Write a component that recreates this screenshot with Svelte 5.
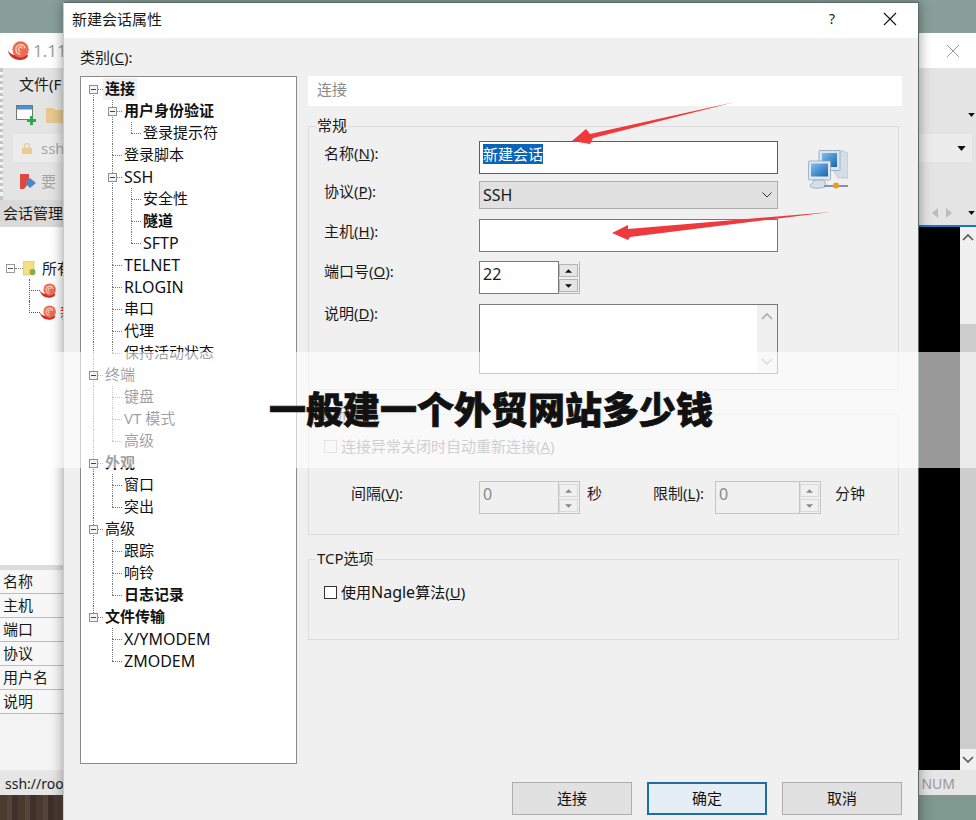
<script>
  // category tree of the session dialog: level + label
  const categories = [
    { level: 0, text: '连接', bold: true, open: true, current: true },
    { level: 1, text: '用户身份验证', bold: true, open: true },
    { level: 2, text: '登录提示符' },
    { level: 1, text: '登录脚本' },
    { level: 1, text: 'SSH', open: true, latin: true },
    { level: 2, text: '安全性' },
    { level: 2, text: '隧道', bold: true },
    { level: 2, text: 'SFTP', latin: true },
    { level: 1, text: 'TELNET', latin: true },
    { level: 1, text: 'RLOGIN', latin: true },
    { level: 1, text: '串口' },
    { level: 1, text: '代理' },
    { level: 1, text: '保持活动状态' },
    { level: 0, text: '终端', open: true },
    { level: 1, text: '键盘' },
    { level: 1, text: 'VT 模式' },
    { level: 1, text: '高级' },
    { level: 0, text: '外观', bold: true, open: true },
    { level: 1, text: '窗口' },
    { level: 1, text: '突出' },
    { level: 0, text: '高级', open: true },
    { level: 1, text: '跟踪' },
    { level: 1, text: '响铃' },
    { level: 1, text: '日志记录', bold: true },
    { level: 0, text: '文件传输', bold: true, open: true },
    { level: 1, text: 'X/YMODEM', latin: true },
    { level: 1, text: 'ZMODEM', latin: true }
  ]

  // does column c carry on below row i?
  function continues(i, c) {
    for (let k = i + 1; k < categories.length; k++) {
      if (categories[k].level < c) return false
      if (categories[k].level === c) return true
    }
    return false
  }

  const props = ['名称', '主机', '端口', '协议', '用户名', '说明']
</script>

{#snippet snail(cls)}
  <svg class={cls} viewBox="0 0 20 18">
    <path d="M0 9c1 6 6 9 11 9 5 0 8-2 8-5H6C4 13 2 12 0 9z" fill="#c9302c" />
    <circle cx="12" cy="8" r="7.8" fill="#ee6a50" />
    <path d="M12 12.4a4.4 4.4 0 1 1 4.2-5.6M12 9.8a2 2 0 1 1 1.8-2.8" fill="none" stroke="#fbd2bd" stroke-width="1.3" />
  </svg>
{/snippet}

{#snippet caret(cls)}
  <svg class={cls} viewBox="0 0 10 6"><path d="M0 0h10L5 6z" fill="#111" /></svg>
{/snippet}

{#snippet spin(disabled, cls)}
  <div class="spin {cls}" class:off={disabled}>
    <div class="spin-value">{cls === 'port' ? '22' : '0'}</div>
    <div class="spin-btns">
      <span class="spin-btn"><svg viewBox="0 0 8 4"><path d="M4 0l4 4H0z" /></svg></span>
      <span class="spin-btn"><svg viewBox="0 0 8 4"><path d="M0 0h8L4 4z" /></svg></span>
    </div>
  </div>
{/snippet}

<div class="desktop">
  <!-- main window behind the dialog -->
  <div class="app">
    <header class="app-title">
      {@render snail('logo')}
      <span class="app-version">1.11</span>
      <svg class="app-close" viewBox="0 0 14 14"><path d="M1 1l12 12M13 1L1 13" /></svg>
    </header>

    <div class="toolbar">
      <div class="menu">文件(F</div>
      <div class="tools">
        <svg class="tool-new" viewBox="0 0 20 20">
          <rect x="0.5" y="0.5" width="16" height="14" fill="#fff" stroke="#777" />
          <rect x="1" y="1" width="15" height="3.5" fill="#4f8fd0" />
          <path d="M11 14h3v-3h3v3h3v3h-3v3h-3v-3h-3z" fill="#2fa84a" />
        </svg>
        <svg class="tool-folder" viewBox="0 0 18 16"><path d="M0 1h7l2 2h9v13H0z" fill="#e7c88f" /></svg>
        {@render caret('tool-caret')}
      </div>
      <div class="address">
        <svg class="lock" viewBox="0 0 10 11">
          <path d="M2.5 5V3a2.500 2.500 0 0 1 5 0v2" fill="none" stroke="#e8cb95" stroke-width="1.3" />
          <rect y="4.500" width="10" height="6.500" rx="1" fill="#e8cb95" />
        </svg>
        <span class="address-text">ssh</span>
        {@render caret('address-caret')}
      </div>
      <div class="hint">
        <svg class="hint-icon" viewBox="0 0 16 15">
          <path d="M0 0h9v9l-5 6H0z" fill="#e0473f" />
          <path d="M10 4l6 5-6 5-5-5z" fill="#4f86c6" />
        </svg>
        <span>要</span>
      </div>
    </div>

    <div class="split">
      <aside class="side">
        <div class="side-head">会话管理</div>
        <div class="side-search"></div>
        <div class="side-tree">
          <div class="st-row">
            <svg class="st-exp" viewBox="0 0 9 9"><rect x=".5" y=".5" width="8" height="8" fill="#fff" stroke="#999" /><path d="M2 4.500h5" stroke="#555" /></svg>
            <span class="st-stub"></span>
            <svg class="st-folder" viewBox="0 0 13 15">
              <rect width="11" height="14" fill="#f6df7e" stroke="#cbb866" stroke-width=".6" />
              <circle cx="9.500" cy="11" r="3" fill="#7fb04f" />
            </svg>
            <span>所有</span>
          </div>
          <div class="st-child">
            {@render snail('st-snail')}
          </div>
          <div class="st-child last">
            {@render snail('st-snail')}
            <span class="st-name">新</span>
          </div>
        </div>
        <div class="side-props">
          {#each props as name}
            <div class="prop">{name}</div>
          {/each}
        </div>
      </aside>

      <main class="term-col">
        <div class="tabs">
          <svg class="tab-arrow" viewBox="0 0 6 10"><path d="M6 0v10L0 5z" /></svg>
          <svg class="tab-arrow" viewBox="0 0 6 10"><path d="M0 0v10l6-5z" /></svg>
          {@render caret('tab-caret')}
        </div>
        <div class="term">
          <div class="term-screen"></div>
          <div class="term-scroll">
            <svg class="chev" viewBox="0 0 12 7"><path d="M1 6l5-5 5 5" /></svg>
            <div class="term-track"></div>
            <div class="term-thumb"></div>
            <svg class="chev" viewBox="0 0 12 7"><path d="M1 1l5 5 5-5" /></svg>
          </div>
        </div>
      </main>
    </div>

    <footer class="status">
      <span>ssh://roo</span>
      <span class="status-num">NUM</span>
    </footer>
  </div>
  <div class="desk-bottom"><div class="wood"></div></div>

  <!-- dialog -->
  <section class="dialog">
    <header class="dlg-title">
      <span class="dlg-name">新建会话属性</span>
      <span class="dlg-help">?</span>
      <svg class="dlg-close" viewBox="0 0 14 14"><path d="M1 1l12 12M13 1L1 13" /></svg>
    </header>

    <div class="dlg-body">
      <div class="dlg-left">
        <div class="cat-label">类别(<u>C</u>):</div>
        <div class="cat-tree">
          {#each categories as row, i}
            <div class="cat-row">
              {#each { length: row.level } as _, c}
                <span class="cell" class:up={continues(i, c)} class:down={continues(i, c)}></span>
              {/each}
              <span class="cell stub" class:up={i > 0} class:down={continues(i, row.level)}>
                <i class="stub-line"></i>
                {#if row.open}
                  <svg class="exp" viewBox="0 0 9 9">
                    <rect x=".5" y=".5" width="8" height="8" fill="#f4f4f4" stroke="#8e8f8f" />
                    <path d="M2 4.500h5" stroke="#444" />
                  </svg>
                {/if}
              </span>
              <span class="cat-text" class:bold={row.bold} class:current={row.current} class:latin={row.latin}>{row.text}</span>
            </div>
          {/each}
        </div>
      </div>

      <div class="dlg-right">
        <div class="page-head">连接</div>

        <fieldset class="group general">
          <legend>常规</legend>
          <div class="form">
            <label class="pad2">名称(<u>N</u>):</label>
            <div class="input focus h33"><span class="selected">新建会话</span></div>
            <svg class="net" viewBox="0 0 40 40">
              <defs>
                <linearGradient id="screen" x1="0" y1="0" x2="1" y2="1">
                  <stop offset="0" stop-color="#7cc0ee" />
                  <stop offset="1" stop-color="#1b62b0" />
                </linearGradient>
              </defs>
              <path d="M13 0h19l8 3v25H30z" fill="#d5dde6" stroke="#a9b7c6" stroke-width=".6" />
              <rect x="11" y="0.5" width="21" height="20" rx="1" fill="#dbe5ef" stroke="#8ea3b8" stroke-width=".8" />
              <rect x="14" y="3" width="15" height="14" fill="url(#screen)" />
              <rect x="0.5" y="11" width="22" height="19" rx="1" fill="#dfe8f1" stroke="#8ea3b8" stroke-width=".8" />
              <rect x="3" y="13.500" width="17" height="13" fill="url(#screen)" />
              <path d="M6 30h10l2 5c2 3-14 5-16 1 0-3 3-2 4-6z" fill="#d6dfe8" stroke="#8ea3b8" stroke-width=".8" />
              <path d="M16 36h24" stroke="#7f95ad" stroke-width="2" />
              <circle cx="28" cy="35.500" r="3" fill="#ee9b1e" />
            </svg>

            <label class="pad0">协议(<u>P</u>):</label>
            <div class="select h28">
              <span class="latin">SSH</span>
              <svg class="sel-chev" viewBox="0 0 10 6"><path d="M.5.5L5 5l4.500-4.500" /></svg>
            </div>

            <label class="pad2">主机(<u>H</u>):</label>
            <div class="input h33"></div>

            <label class="pad0">端口号(<u>O</u>):</label>
            {@render spin(false, 'port')}

            <label class="pad-up">说明(<u>D</u>):</label>
            <div class="notes">
              <div class="notes-scroll">
                <svg class="notes-chev" viewBox="0 0 12 7"><path d="M1 6l5-5 5 5" /></svg>
                <svg class="notes-chev" viewBox="0 0 12 7"><path d="M1 1l5 5 5-5" /></svg>
              </div>
            </div>
          </div>
        </fieldset>

        <fieldset class="group reconnect">
          <legend>重新连接</legend>
          <div class="check off"><span class="box"></span>连接异常关闭时自动重新连接(<u>A</u>)</div>
          <div class="retry">
            <span class="retry-label">间隔(<u>V</u>):</span>
            {@render spin(true, 'small')}
            <span class="retry-unit">秒</span>
            <span class="retry-limit">限制(<u>L</u>):</span>
            {@render spin(true, 'wide')}
            <span class="retry-min">分钟</span>
          </div>
        </fieldset>

        <fieldset class="group tcp">
          <legend>TCP选项</legend>
          <div class="check"><span class="box"></span>使用<span class="latin">Nagle</span>算法(<u>U</u>)</div>
        </fieldset>
      </div>
    </div>

    <footer class="dlg-foot">
      <button>连接</button>
      <button class="primary">确定</button>
      <button>取消</button>
    </footer>
  </section>

  <!-- annotation arrows drawn on the screenshot -->
  <svg class="arrows" viewBox="0 0 976 820">
    <path d="M572 141L586 129 590 134 735 102 593 138 590 144z" />
    <path d="M612 233L628 225 628 229 831 212 630 237 628 240z" />
  </svg>

  <!-- caption band -->
  <div class="band"><h1>一般建一个外贸网站多少钱</h1></div>
</div>

<style>
  :global(body) {
    margin: 0;
  }

  .desktop {
    position: relative;
    width: 976px;
    height: 820px;
    overflow: hidden;
    background: #88a099;
    font-family: "Noto Sans", "Noto Sans CJK SC", sans-serif;
    font-size: 15px;
    line-height: 20px;
    color: #1a1a1a;
  }

  .latin {
    font-size: 16px;
  }

  /* main window */
  .app {
    margin-top: 33px;
    height: 762px;
    display: flex;
    flex-direction: column;
    background: #f4f4f4;
  }

  .desk-bottom {
    height: 25px;
    background: #7f9890;
  }

  .wood {
    width: 70px;
    height: 100%;
    background: repeating-linear-gradient(90deg, #4a3a30 0 7px, #54443a 7px 12px, #3f312a 12px 18px);
  }

  .app-title {
    height: 35px;
    flex: none;
    display: flex;
    align-items: center;
    padding: 0 16px 0 8px;
    background: #fff;
  }

  .logo {
    width: 21px;
    height: 19px;
  }

  .app-version {
    margin-left: 4px;
    font-size: 17px;
    color: #a0a0a0;
  }

  .app-close {
    width: 14px;
    height: 14px;
    margin-left: auto;
    fill: none;
    stroke: #999;
  }

  .toolbar {
    height: 132px;
    flex: none;
    box-sizing: border-box;
    padding: 6px 0 0 13px;
    background: #e4e4e4;
    border-left: 3px dotted #c4c4c4;
    background-clip: padding-box;
    display: flex;
    flex-direction: column;
  }

  .menu {
    margin-left: 3px;
    height: 20px;
  }

  .tools {
    display: flex;
    align-items: center;
    height: 20px;
    margin-top: 11px;
    padding-left: 0;
  }

  .tool-new {
    width: 20px;
    height: 20px;
  }

  .tool-folder {
    width: 18px;
    height: 16px;
    margin-left: 10px;
  }

  .tool-caret {
    width: 7px;
    height: 4px;
    margin-left: auto;
    margin-right: 1px;
  }

  .address {
    display: flex;
    align-items: center;
    height: 28px;
    margin: 9px 4px 0 -3px;
    padding-left: 9px;
    background: #ececec;
  }

  .lock {
    width: 10px;
    height: 11px;
  }

  .address-text {
    margin-left: 9px;
    color: #a6a6a6;
  }

  .address-caret {
    width: 9px;
    height: 5px;
    margin-left: auto;
    margin-right: 6px;
  }

  .hint {
    display: flex;
    align-items: center;
    margin-top: 9px;
    padding-left: 4px;
    color: #a6a6a6;
  }

  .hint-icon {
    width: 16px;
    height: 15px;
    margin-right: 5px;
  }

  .split {
    flex: 1;
    display: flex;
    min-height: 0;
  }

  .side {
    width: 918px;
    flex: none;
    display: flex;
    flex-direction: column;
  }

  .side-head {
    height: 27px;
    line-height: 26px;
    padding-left: 3px;
    background: #dadada;
  }

  .side-search {
    height: 28px;
    background: #fff;
  }

  .side-tree {
    height: 310px;
    padding-top: 2px;
    box-sizing: border-box;
    background: #fff;
  }

  .st-row {
    display: flex;
    align-items: center;
    height: 22px;
    padding-left: 6px;
  }

  .st-exp {
    width: 9px;
    height: 9px;
  }

  .st-stub {
    width: 8px;
    border-top: 1px dotted #777;
  }

  .st-folder {
    width: 13px;
    height: 15px;
    margin-right: 6px;
  }

  .st-child {
    position: relative;
    display: flex;
    align-items: center;
    height: 22px;
    padding-left: 40px;
  }

  .st-child::before {
    content: '';
    position: absolute;
    left: 29px;
    top: 0;
    height: 11px;
    width: 10px;
    border-left: 1px dotted #555;
    border-bottom: 1px dotted #555;
  }

  .st-child:not(.last)::after {
    content: '';
    position: absolute;
    left: 29px;
    top: 11px;
    height: 11px;
    border-left: 1px dotted #555;
  }

  .st-snail {
    width: 16px;
    height: 15px;
  }

  .st-name {
    margin-left: 4px;
    color: #d23b32;
  }

  .side-props {
    flex: 1;
    border-top: 5px solid #dcdcdc;
    background: #f4f4f4;
  }

  .prop {
    height: 23px;
    line-height: 22px;
    padding-left: 3px;
    border-bottom: 1px solid #bdbdbd;
    background: #f7f7f7;
  }

  .term-col {
    flex: 1;
    display: flex;
    flex-direction: column;
    min-width: 0;
  }

  .tabs {
    height: 25px;
    flex: none;
    display: flex;
    align-items: center;
    padding-left: 14px;
    background: #e4e4e4;
    border-bottom: 2px solid #1a78c2;
  }

  .tab-arrow {
    width: 6px;
    height: 10px;
    margin-right: 8px;
    fill: #bdbdbd;
  }

  .tab-caret {
    width: 7px;
    height: 4px;
    margin-left: auto;
    margin-right: 1px;
  }

  .term {
    flex: 1;
    display: flex;
    min-height: 0;
  }

  .term-screen {
    width: 42px;
    background: #000;
  }

  .term-scroll {
    flex: 1;
    display: flex;
    flex-direction: column;
    background: #f0f0f0;
  }

  .chev {
    width: 12px;
    height: 7px;
    padding: 7px 2px;
    flex: none;
    fill: none;
    stroke: #555;
    stroke-width: 1.6;
  }

  .term-track {
    height: 76px;
  }

  .term-thumb {
    flex: 1;
    background: #cdcdcd;
  }

  .status {
    height: 25px;
    flex: none;
    box-sizing: border-box;
    display: flex;
    align-items: center;
    padding: 3px 0 0 5px;
    font-size: 14px;
    background: #e6e6e6;
  }

  .status-num {
    margin-left: auto;
    margin-right: 21px;
    color: #999;
  }

  /* dialog */
  .dialog {
    position: absolute;
    left: 63px;
    top: 2px;
    width: 856px;
    height: 840px;
    box-sizing: border-box;
    border: 1px solid #5d6b68;
    border-left-color: #c9c9c9;
    background: #f0f0f0;
    box-shadow: 0 0 12px rgba(0, 0, 0, 0.4);
  }

  .dlg-title {
    height: 35px;
    box-sizing: border-box;
    display: flex;
    align-items: center;
    background: #fff;
    padding: 0 21px 4px 8px;
  }

  .dlg-help {
    margin-left: auto;
    margin-right: 48px;
    font-size: 14px;
  }

  .dlg-close {
    width: 14px;
    height: 14px;
    fill: none;
    stroke: #111;
    stroke-width: 1.1;
  }

  .dlg-body {
    display: flex;
    gap: 11px;
    padding: 0 16px;
  }

  .dlg-left {
    width: 217px;
    flex: none;
  }

  .cat-label {
    margin-top: 9px;
    height: 21px;
  }

  .cat-tree {
    height: 688px;
    margin-top: 8px;
    box-sizing: border-box;
    padding: 1px 0 0 3px;
    border: 1px solid #8a8a8a;
    background: #fff;
  }

  .cat-row {
    display: flex;
    height: 22px;
    align-items: stretch;
    white-space: nowrap;
  }

  .cell {
    position: relative;
    width: 19px;
    flex: none;
  }

  .cell.up::before,
  .cell.down::after {
    content: '';
    position: absolute;
    left: 9px;
    height: 11px;
    border-left: 1px dotted #777;
  }

  .cell.up::before {
    top: 0;
  }

  .cell.down::after {
    top: 11px;
  }

  .stub-line {
    position: absolute;
    left: 9px;
    top: 11px;
    width: 10px;
    border-top: 1px dotted #777;
  }

  .exp {
    position: absolute;
    left: 5px;
    top: 7px;
    width: 9px;
    height: 9px;
    z-index: 1;
  }

  .cat-text {
    margin-left: 2px;
    line-height: 20px;
    height: 22px;
    color: #111;
  }

  .cat-text.latin {
    line-height: 22px;
  }

  .cat-text.bold {
    font-weight: 700;
  }

  .cat-text.current {
    background: #f0f0f0;
    margin-left: 0;
    padding: 0 2px;
  }

  .dlg-right {
    width: 594px;
    flex: none;
    padding-top: 38px;
  }

  .page-head {
    height: 30px;
    line-height: 26px;
    padding-left: 9px;
    background: #fff;
    color: #8a8a8a;
  }

  .group {
    margin: 0;
    width: 591px;
    box-sizing: border-box;
    min-width: 0;
    border: 1px solid #dcdcdc;
    border-radius: 0;
    padding: 0 15px;
  }

  .group legend {
    height: 20px;
    line-height: 18px;
    margin-left: -8px;
    padding: 0 1px;
  }

  .general {
    margin-top: 10px;
    padding-top: 5px;
    padding-bottom: 15px;
  }

  .reconnect {
    margin-top: 14px;
    padding-top: 12px;
    padding-bottom: 20px;
  }

  .tcp {
    margin-top: 14px;
    padding-top: 13px;
    padding-bottom: 35px;
  }

  .form {
    display: grid;
    grid-template-columns: 155px 299px 1fr;
    grid-template-rows: 40px 38px 42px 43px 70px;
    align-items: start;
  }

  .form label {
    grid-column: 1;
  }

  .pad2 {
    margin-top: 2px;
  }

  .pad0 {
    margin-top: 0;
  }

  .pad-up {
    margin-top: -1px;
  }

  .form > :not(.net):not(label) {
    grid-column: 2;
  }

  .input,
  .notes {
    box-sizing: border-box;
    border: 1px solid #7a7a7a;
    background: #fff;
  }

  .h33 {
    height: 33px;
  }

  .h28 {
    height: 28px;
  }

  .input.focus {
    display: flex;
    align-items: flex-start;
    padding: 2px 0 0 3px;
    border-color: #0f7a96;
  }

  .selected {
    line-height: 20px;
    background: #0a64b8;
    color: #fff;
  }

  .net {
    grid-column: 3;
    grid-row: 1 / span 2;
    width: 40px;
    height: 40px;
    margin: 9px 0 0 30px;
  }

  .select {
    display: flex;
    align-items: center;
    justify-content: space-between;
    box-sizing: border-box;
    padding: 0 5px 0 3px;
    border: 1px solid #adadad;
    background: #e1e1e1;
  }

  .sel-chev {
    width: 10px;
    height: 6px;
    fill: none;
    stroke: #333;
  }

  .notes {
    height: 70px;
    display: flex;
    justify-content: flex-end;
    border-color: #7a7a7a;
  }

  .notes-scroll {
    width: 20px;
    display: flex;
    flex-direction: column;
    align-items: center;
    justify-content: space-between;
    padding: 8px 0;
    box-sizing: border-box;
    background: #f0f0f0;
  }

  .notes-chev {
    width: 12px;
    height: 7px;
    fill: none;
    stroke: #aaa;
    stroke-width: 1.6;
  }

  .spin {
    display: flex;
    height: 33px;
    box-sizing: border-box;
  }

  .spin.port {
    width: 101px;
  }

  .spin.small {
    width: 101px;
  }

  .spin.wide {
    width: 106px;
  }

  .spin-value {
    flex: 1;
    box-sizing: border-box;
    padding-left: 3px;
    font-size: 16px;
    line-height: 25px;
    border: 1px solid #7a7a7a;
    background: #fff;
  }

  .spin-btns {
    width: 21px;
    flex: none;
    display: flex;
    flex-direction: column;
    justify-content: space-between;
    padding: 2px 1px 1px 0;
    box-sizing: border-box;
    border: 1px solid #b5b5b5;
    border-left: none;
    border-color: transparent #b5b5b5 #b5b5b5 transparent;
  }

  .spin-btn {
    height: 13px;
    display: flex;
    align-items: center;
    justify-content: center;
    background: #e5e5e5;
    border: 1px solid #b5b5b5;
    box-sizing: border-box;
  }

  .spin-btn svg {
    width: 7px;
    height: 4px;
    fill: #111;
  }

  .spin.off .spin-value {
    border-color: #c4c4c4;
    background: #f0f0f0;
    color: #8a8a8a;
  }

  .spin.off .spin-btns {
    border-color: #c4c4c4;
  }

  .spin.off .spin-btn {
    background: #f0f0f0;
    border-color: #dadada;
  }

  .spin.off .spin-btn svg {
    fill: #888;
  }

  .check {
    display: flex;
    align-items: center;
    height: 22px;
    box-sizing: border-box;
    padding-bottom: 2px;
    color: #111;
  }

  .check.off {
    color: #888;
  }

  .box {
    width: 13px;
    height: 13px;
    box-sizing: border-box;
    margin-right: 4px;
    border: 1px solid #333;
    background: #fff;
  }

  .check.off .box {
    border-color: #bbb;
    background: #f0f0f0;
  }

  .retry {
    display: flex;
    align-items: flex-start;
    margin-top: 23px;
    padding-left: 27px;
  }

  .retry > span {
    margin-top: 2px;
  }

  .retry-label {
    width: 128px;
  }

  .retry-unit {
    width: 66px;
    margin-left: 7px;
  }

  .retry-limit {
    width: 62px;
  }

  .retry-min {
    margin-left: 14px;
  }

  .dlg-foot {
    display: flex;
    justify-content: flex-end;
    gap: 15px;
    margin-top: 18px;
    padding-right: 16px;
  }

  .dlg-foot button {
    width: 120px;
    height: 33px;
    padding: 0 0 2px;
    font: inherit;
    color: #111;
    border: 1px solid #adadad;
    background: #e1e1e1;
  }

  .dlg-foot .primary {
    border: 2px solid #1c6ea4;
    background: #e5eef5;
  }

  /* overlays */
  .arrows {
    position: absolute;
    left: 0;
    top: 0;
    width: 976px;
    height: 820px;
    fill: #ee3a3d;
    pointer-events: none;
  }

  .band {
    position: absolute;
    left: 0;
    top: 352px;
    width: 976px;
    height: 116px;
    display: flex;
    align-items: center;
    justify-content: center;
    padding-left: 6px;
    padding-bottom: 5px;
    box-sizing: border-box;
    background: rgba(255, 255, 255, 0.6);
  }

  .band h1 {
    margin: 0;
    font-family: "Noto Sans CJK SC", sans-serif;
    font-size: 37px;
    font-weight: 900;
    line-height: 44px;
    color: #111;
    -webkit-text-stroke: 0.7px #111;
  }
</style>
